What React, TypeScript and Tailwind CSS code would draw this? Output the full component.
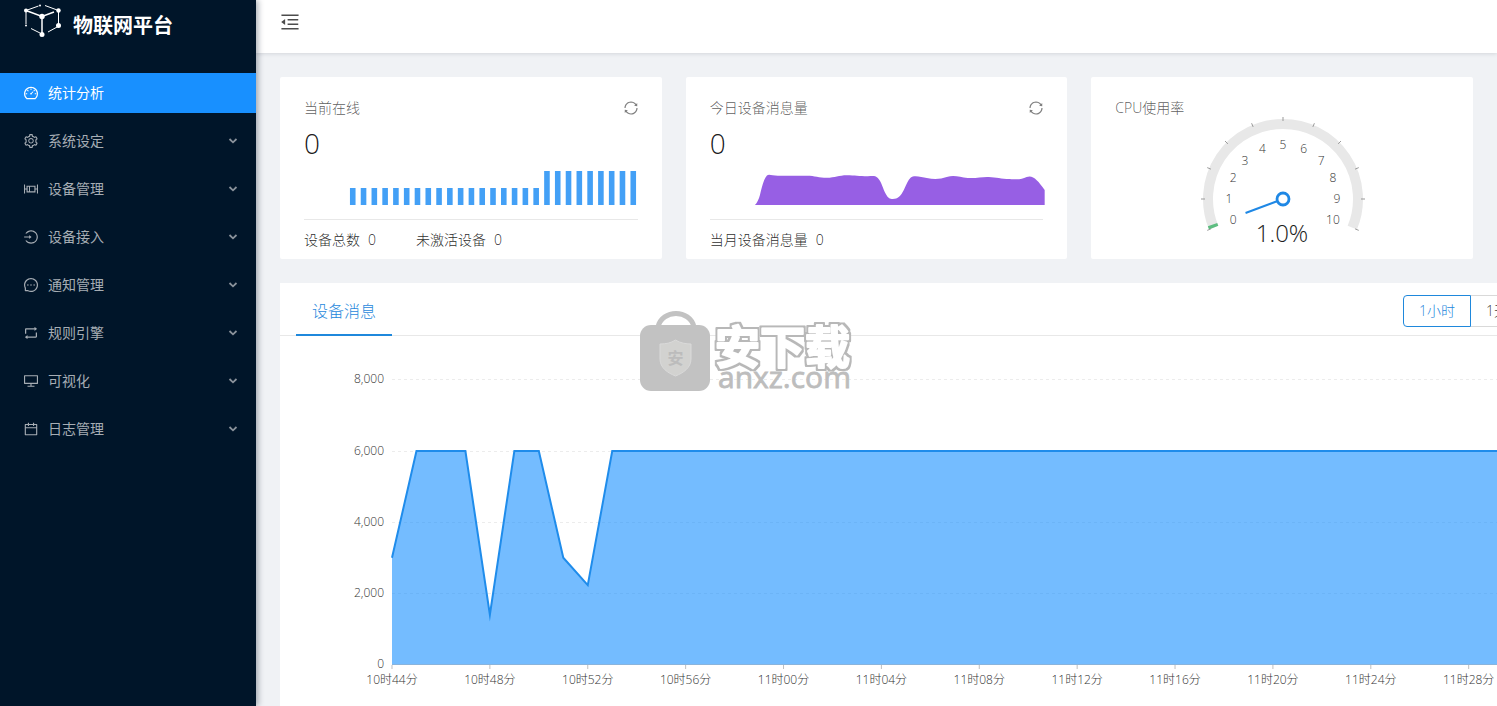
import React from 'react';
import {
  AiOutlineBoxPlot,
  AiOutlineCalendar,
  AiOutlineDashboard,
  AiOutlineDesktop,
  AiOutlineLogin,
  AiOutlineMenuFold,
  AiOutlineMessage,
  AiOutlineRetweet,
  AiOutlineSetting,
  AiOutlineSync,
} from 'react-icons/ai';

const menu = [
  { label: '统计分析', Icon: AiOutlineDashboard, active: true },
  { label: '系统设定', Icon: AiOutlineSetting },
  { label: '设备管理', Icon: AiOutlineBoxPlot },
  { label: '设备接入', Icon: AiOutlineLogin },
  { label: '通知管理', Icon: AiOutlineMessage },
  { label: '规则引擎', Icon: AiOutlineRetweet },
  { label: '可视化', Icon: AiOutlineDesktop },
  { label: '日志管理', Icon: AiOutlineCalendar },
];

function Logo() {
  return (
    <svg className="h-9 w-10 shrink-0" viewBox="0 0 40 36" fill="none" stroke="#fff" strokeWidth="1" aria-hidden="true">
      <path d="M3 7.5 L15.5 3 M22 2.5 L35.5 7.5 M3 7.5 V21 M35.500 7.500 V22.500 M8 25.500 L17 30 M25 29 L35 23.500" />
      <path d="M3 7.5 L19 13.500 L31 9" strokeWidth="1.500" />
      <path d="M19 13.500 V31" strokeWidth="1.500" />
      <g fill="#fff" stroke="none">
        <circle cx="3" cy="7.500" r="2" />
        <circle cx="35.500" cy="7.500" r="2.200" />
        <circle cx="19" cy="13.500" r="2.700" />
        <circle cx="35.500" cy="22.500" r="2.500" />
        <circle cx="19" cy="31.500" r="2.500" />
        <circle cx="3" cy="22.500" r="1" />
        <circle cx="17" cy="2.500" r="1" />
      </g>
    </svg>
  );
}

function Sidebar() {
  return (
    <aside className="z-10 w-64 shrink-0 bg-[#001529] shadow-[2px_0_6px_rgba(0,21,41,0.35)]">
      <div className="flex h-[73px] items-start gap-2 pt-[3px] pl-[23px]">
        <Logo />
        <h1 className="pt-2 pl-0.5 text-xl leading-[30px] font-bold text-white">物联网平台</h1>
      </div>
      <nav className="flex flex-col gap-2">
        {menu.map(({ label, Icon, active }) => (
          <a
            key={label}
            href="#"
            className={
              active
                ? 'flex h-10 items-center gap-[9px] bg-[#1890ff] pr-6 pl-[23px] text-sm text-white'
                : 'flex h-10 items-center gap-[9px] pr-6 pl-[23px] text-sm text-[#a6adb4]'
            }
          >
            <Icon className="size-4 shrink-0" />
            <span className="flex-1">{label}</span>
            {!active && (
              <svg className="-mr-1.5 h-2 w-2.5 text-[#8a929b]" viewBox="0 0 10 8" fill="none" stroke="currentColor" strokeWidth="1.800" aria-hidden="true">
                <path d="M1.500 2 L5 5.300 L8.500 2" />
              </svg>
            )}
          </a>
        ))}
      </nav>
    </aside>
  );
}

function Stat({ label, value }: { label: string; value: string }) {
  return (
    <div className="flex gap-2 text-sm leading-[22px] font-light text-black/85">
      <span>{label}</span>
      <span>{value}</span>
    </div>
  );
}

function StatCard({
  title,
  total,
  footer,
  children,
}: {
  title: string;
  total: string;
  footer: React.ReactNode;
  children: React.ReactNode;
}) {
  return (
    <section className="rounded-xs bg-white px-6 pt-5 pb-2">
      <div className="flex items-center justify-between">
        <h2 className="text-sm leading-[22px] font-light text-black/65">{title}</h2>
        <button type="button" aria-label="刷新" className="-mr-px text-black/50">
          <AiOutlineSync className="size-4" />
        </button>
      </div>
      <p className="mt-1.5 text-[28px] leading-9 font-light text-black/90">{total}</p>
      <div className="mb-3 h-[46px]">{children}</div>
      <div className="flex gap-10 border-t border-[#e8e8e8] pt-[9px]">{footer}</div>
    </section>
  );
}

function MiniBars() {
  const bars = Array.from({ length: 27 }, (_, i) => (i < 18 ? 17 : 34));
  return (
    <svg className="h-full w-full" viewBox="0 0 334 46" preserveAspectRatio="none" fill="#43a0f6" aria-hidden="true">
      {bars.map((h, i) => (
        <rect key={i} x={46 + i * 10.8} y={44 - h} width="5.600" height={h} />
      ))}
    </svg>
  );
}

function MiniArea() {
  return (
    <svg className="h-full w-full overflow-visible" viewBox="0 0 334 46" preserveAspectRatio="none" fill="#975fe4" aria-hidden="true">
      <path d="M45 44 C47 42 49 38 50 34 C52 25 54 18 57 14.500 C59 12.700 62 14.700 68 14.700 H97 C105 14.700 109 16.800 117 16.800 C125 16.800 129 14.300 137 14.300 C145 14.300 149 15.300 158 15.300 C162 15.300 165 14.300 168 17 C172 21 173 28 176 33 C178 37 180 38 183 38 C188 38 191 35 194 29 C197 23 198 19 201 16.500 C204 13.800 212 16 217 17 C225 18.800 231 18 237 16 C245 13.500 250 16.500 258 17 C267 17.500 272 15.700 279 16 C287 16.500 291 17.800 300 18 C310 18.800 312 18 317 16 C323 13.500 328 19 335 29 V44 Z" />
    </svg>
  );
}

function polar(r: number, deg: number) {
  const a = (deg * Math.PI) / 180;
  return [101 + r * Math.cos(a), 80 - r * Math.sin(a)];
}

function arc(r: number, from: number, to: number) {
  const [x1, y1] = polar(r, from);
  const [x2, y2] = polar(r, to);
  return `M${x1} ${y1} A${r} ${r} 0 ${from - to > 180 ? 1 : 0} 1 ${x2} ${y2}`;
}

function Gauge() {
  const [nx, ny] = polar(40, 200.5);
  return (
    <svg className="mx-auto block h-[132px] w-[200px] overflow-visible" viewBox="0 0 200 132" role="img" aria-label="CPU使用率 1.0%">
      <path d={arc(75, 202.5, -22.5)} fill="none" stroke="#e8e8e8" strokeWidth="10" />
      <path d={arc(75, 202.5, 200)} fill="none" stroke="#5dbd80" strokeWidth="10" />
      {Array.from({ length: 11 }, (_, i) => {
        const deg = 202.5 - i * 22.5;
        const [x1, y1] = polar(78, deg);
        const [x2, y2] = polar(82, deg);
        const [tx, ty] = polar(54, deg);
        return (
          <g key={i}>
            <line x1={x1} y1={y1} x2={x2} y2={y2} stroke="#999" strokeWidth="1" />
            <text x={tx} y={ty + 4} textAnchor="middle" className="fill-[#333] text-xs font-light">
              {i}
            </text>
          </g>
        );
      })}
      <line x1="101" y1="80" x2={nx} y2={ny} stroke="#1f88e5" strokeWidth="2" />
      <circle cx="101" cy="80" r="6" fill="#fff" stroke="#1f88e5" strokeWidth="2.800" />
      <text x="100" y="123" textAnchor="middle" className="fill-[#1c1c1c] text-2xl font-light">
        1.0%
      </text>
    </svg>
  );
}

const STEP = 24.47;
const values = [3000, 6000, 6000, 6000, 1400, 6000, 6000, 3000, 2230].concat(Array.from({ length: 52 }, () => 6000));
const yOf = (v: number) => 328.5 - (v / 8000) * 284.6;

function MessageChart() {
  const line = values.map((v, i) => `${112 + i * STEP},${yOf(v)}`).join(' ');
  const end = 112 + (values.length - 1) * STEP;
  return (
    <svg className="block h-[380px] w-[1600px] text-xs font-light" viewBox="0 0 1600 380" role="img" aria-label="设备消息">
      {[8000, 6000, 4000, 2000, 0].map((v) => (
        <g key={v}>
          {v > 0 && (
            <line x1="112" x2={end} y1={Math.floor(yOf(v)) + 0.5} y2={Math.floor(yOf(v)) + 0.5} stroke="#ececec" strokeDasharray="3 3" />
          )}
          <text x="104" y={yOf(v) + 3.5} textAnchor="end" className="fill-[#333]">
            {v.toLocaleString('en-US')}
          </text>
        </g>
      ))}
      <polygon points={`112,328.5 ${line} ${end},328.5`} fill="#1890ff" fillOpacity="0.6" />
      <polyline points={line} fill="none" stroke="#1f8ceb" strokeWidth="2" strokeMiterlimit="10" />
      <line x1="112" x2={end} y1="328.500" y2="328.500" stroke="#8ab4dc" />
      {Array.from({ length: 13 }, (_, i) => {
        const minute = 44 + i * 4;
        const label = `${10 + Math.floor(minute / 60)}时${String(minute % 60).padStart(2, '0')}分`;
        const x = 112 + i * 4 * STEP;
        return (
          <g key={label}>
            <line x1={x} x2={x} y1="329" y2="333" stroke="#bfbfbf" />
            <text x={x} y="348" textAnchor="middle" className="fill-[#333]">
              {label}
            </text>
          </g>
        );
      })}
    </svg>
  );
}

function Watermark() {
  return (
    <svg className="pointer-events-none absolute top-[22px] left-[356px] h-[92px] w-[224px]" viewBox="0 0 224 92" aria-hidden="true">
      <defs>
        <filter id="outline" x="-5%" y="-10%" width="110%" height="120%">
          <feMorphology in="SourceAlpha" operator="dilate" radius="2" result="outer" />
          <feFlood floodColor="#b8b8b8" />
          <feComposite in2="outer" operator="in" result="edge" />
          <feMerge>
            <feMergeNode in="edge" />
            <feMergeNode in="SourceGraphic" />
          </feMerge>
        </filter>
      </defs>
      <path d="M22 22 C26 4 54 4 58 22" fill="none" stroke="#c2c2c2" strokeWidth="5" />
      <rect x="4" y="20" width="70" height="66" rx="11" fill="#c2c2c2" />
      <path d="M39.500 35 C44 38 50 39 55 39 V54 C55 63 47 68 39.500 71 C32 68 24 63 24 54 V39 C30 39 35 38 39.500 35 Z" fill="#d2d2d0" stroke="#dadada" />
      <text x="39.500" y="59" textAnchor="middle" fill="#bcbcbc" className="text-base font-bold">
        安
      </text>
      <text
        x="79"
        y="59"
        fill="#fff"
        stroke="#fff"
        strokeWidth="2"
        strokeLinejoin="round"
        filter="url(#outline)"
        className="text-[45px] font-bold"
      >
        安下载
      </text>
      <text x="82" y="83" fill="#bdbdbd" stroke="#bdbdbd" strokeWidth="0.800" className="text-[30px]">
        anxz.com
      </text>
    </svg>
  );
}

export default function App() {
  return (
    <div className="flex h-screen overflow-hidden bg-[#f0f2f5] font-['Open_Sans','Noto_Sans_CJK_SC',sans-serif]">
      <Sidebar />
      <div className="flex min-w-0 flex-1 flex-col">
        <header className="flex h-[53px] shrink-0 items-center bg-white px-[23px] pb-2.5 shadow-[0_1px_4px_rgba(0,21,41,0.12)]">
          <button type="button" aria-label="收起菜单" className="text-black/70">
            <AiOutlineMenuFold className="size-[22px]" />
          </button>
        </header>
        <main className="flex flex-col gap-6 p-6">
          <div className="grid grid-cols-3 gap-6">
            <StatCard
              title="当前在线"
              total="0"
              footer={
                <>
                  <Stat label="设备总数" value="0" />
                  <Stat label="未激活设备" value="0" />
                </>
              }
            >
              <MiniBars />
            </StatCard>
            <StatCard title="今日设备消息量" total="0" footer={<Stat label="当月设备消息量" value="0" />}>
              <MiniArea />
            </StatCard>
            <section className="rounded-xs bg-white px-6 pt-5 pb-2">
              <h2 className="text-sm leading-[22px] font-light text-black/65">CPU使用率</h2>
              <Gauge />
            </section>
          </div>
          <section className="relative -mr-6 overflow-hidden bg-white">
            <div className="flex h-[53px] items-stretch justify-between border-b border-[#e8e8e8] pl-4">
              <button type="button" className="-mb-px border-b-2 border-[#1f88dc] px-4 pt-1 text-base font-light text-[#1f88dc]">
                设备消息
              </button>
              <div className="flex w-[94px] items-center overflow-hidden pt-1 text-sm font-light whitespace-nowrap">
                <button type="button" aria-pressed="true" className="h-8 w-[68px] shrink-0 rounded-l-sm border border-[#1f88dc] text-[#1f88dc]">
                  1小时
                </button>
                <button type="button" aria-pressed="false" className="h-8 shrink-0 border-y border-r border-[#d9d9d9] px-[15px] text-black/80">
                  1天
                </button>
              </div>
            </div>
            <MessageChart />
            <Watermark />
          </section>
        </main>
      </div>
    </div>
  );
}
